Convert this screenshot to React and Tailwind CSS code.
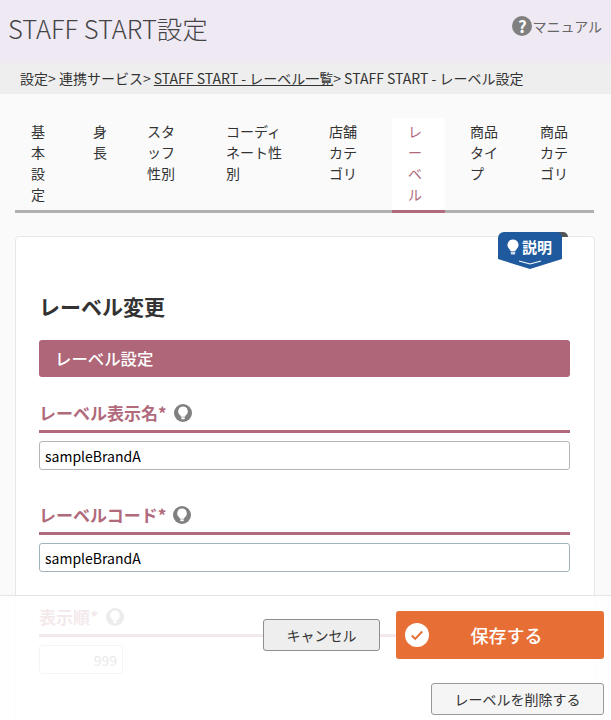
const font = { fontFamily: '"Noto Sans CJK JP", "Noto Sans", sans-serif' }

const tabs = [
  { lines: ["基", "本", "設", "定"], cls: "w-[62px] pl-4" },
  { lines: ["身", "長"], cls: "w-[54px] pl-4" },
  { lines: ["スタ", "ッフ", "性別"], cls: "w-[79px] pl-4" },
  { lines: ["コーディ", "ネート性", "別"], cls: "w-[103px] pl-4" },
  { lines: ["店舗", "カテ", "ゴリ"], cls: "w-[79px] pl-4" },
  { lines: ["レ", "ー", "ベ", "ル"], cls: "w-[53px] pl-4", active: true },
  { lines: ["商品", "タイ", "プ"], cls: "w-[79px] pl-[25px]" },
  { lines: ["商品", "カテ", "ゴリ"], cls: "w-[70px] pl-4" },
]

function Bulb({ className, bg = "#808080" }) {
  return (
    <svg viewBox="0 0 18 18" className={className}>
      <circle cx="9" cy="9" r="9" fill={bg} />
      <path d="M9 2.600a4.800 4.800 0 0 0-2.900 8.600c.6.500.8 1 .8 1.500h4.200c0-.5.200-1 .8-1.500A4.800 4.800 0 0 0 9 2.600z" fill="#fff" />
      <rect x="7.200" y="13.300" width="3.600" height="2" rx=".7" fill="#fff" />
    </svg>
  )
}

function Field({ label, children }) {
  return (
    <div className="h-[102px]">
      <div className="flex h-[30px] items-center gap-[7px] text-[17px] leading-[30px] font-bold text-[#b06a7c]">
        {label}
        <Bulb className="h-[18px] w-[18px]" />
      </div>
      <div className="mt-[2px] h-[3px] bg-[#b06a7c]" />
      {children}
    </div>
  )
}

export default function App() {
  return (
    <div className="relative h-[720px] w-[611px] overflow-hidden bg-[#fafafa] text-[#333]" style={font}>
      <header className="flex h-[63px] items-start justify-between bg-[#efe9f4] pl-2 pr-[9px]">
        <h1 className="mt-[9px] text-[25.5px] leading-[38px] font-light text-[#444]">STAFF START設定</h1>
        <a className="mt-[16px] flex items-center text-sm leading-5 text-[#666]">
          <span className="flex h-5 w-5 items-center justify-center rounded-full bg-[#808080] text-[17px] font-bold text-white">?</span>
          マニュアル
        </a>
      </header>

      <nav className="h-[31px] bg-[#eeeeee] pl-5 text-sm leading-[31px] whitespace-nowrap">
        設定&gt; 連携サービス&gt; <span className="underline">STAFF START - レーベル一覧</span>&gt; STAFF START - レーベル設定
      </nav>

      <div className="mx-[15px] mt-6 flex h-[95px] w-[579px] border-b-[3px] border-[#b0b0b0] text-sm leading-[21px]">
        {tabs.map((tab, i) => (
          <div
            key={i}
            className={`${tab.cls} -mb-[3px] h-[95px] pt-[3px] ${tab.active ? "border-b-[3px] border-[#b06a7c] bg-white text-[#b06a7c]" : ""}`}
          >
            {tab.lines.map((line) => (
              <div key={line}>{line}</div>
            ))}
          </div>
        ))}
      </div>

      <section className="relative mx-[15px] mt-[23px] h-[500px] w-[580px] rounded border border-[#e8e8e8] bg-white pt-[53px] pr-6 pl-[23px]">
        <div className="absolute top-[-5px] right-[25px] h-[38px] w-[71px]">
          <svg viewBox="0 0 71 38" className="absolute inset-0 h-full w-full">
            <path d="M58 0h7a5 5 0 0 1 5 5H58z" fill="#555" />
            <path d="M6 0h53a5 5 0 0 1 5 5v22l-32 10L0 27V6a6 6 0 0 1 6-6z" fill="#1f5a9e" />
            <path d="M21 29l11 3 11-3" fill="none" stroke="#fff" strokeWidth="1.200" />
            <path d="M15 7.500a5.500 5.500 0 0 0-3.300 9.900c.7.600.9 1.200.9 1.800h4.800c0-.6.200-1.200.9-1.800A5.500 5.500 0 0 0 15 7.500z" fill="#fff" />
            <rect x="12.800" y="19.800" width="4.400" height="2.800" rx=".8" fill="#cfdcec" />
          </svg>
          <span className="absolute top-[3px] left-6 text-[15px] leading-[24px] font-bold text-white">説明</span>
        </div>

        <h2 className="text-[21px] leading-[32px] font-bold text-[#333]">レーベル変更</h2>
        <div className="mt-[18px] flex h-[37px] items-center rounded-[3px] bg-[#ae6678] pl-4 text-[16.4px] font-medium text-white">
          レーベル設定
        </div>

        <div className="mt-[21px]">
          <Field label="レーベル表示名*">
            <input
              readOnly
              value="sampleBrandA"
              className="mt-2 h-[29px] w-full rounded-[3px] border border-[#b5b5b5] bg-white px-[5px] text-sm text-black outline-none"
            />
          </Field>
          <Field label="レーベルコード*">
            <input
              readOnly
              value="sampleBrandA"
              className="mt-2 h-[29px] w-full rounded-[3px] border border-[#9fb4bb] bg-white px-[5px] text-sm text-black outline-none"
            />
          </Field>
          <Field label="表示順*">
            <input
              readOnly
              value="999"
              className="mt-2 h-[29px] w-[84px] rounded-[3px] border border-[#b5b5b5] bg-white px-[5px] text-right text-sm text-[#666] outline-none"
            />
          </Field>
        </div>
      </section>

      {/* Fixed footer sits over the form */}
      <footer className="absolute inset-x-0 bottom-0 h-[125px] border-t border-[#e4e4e4] bg-white/85">
        <div className="mt-[15px] mr-[7px] flex items-start justify-end">
          <button className="mt-2 h-8 w-[117px] rounded-[3px] border border-[#8e8e8e] bg-[#eeeeee] text-sm text-[#333]">
            キャンセル
          </button>
          <button className="relative ml-4 h-12 w-[208px] rounded-[3px] bg-[#e76f36] pl-[13px] text-lg font-medium text-white">
            <span className="absolute top-[12px] left-[9px] flex h-6 w-6 items-center justify-center rounded-full bg-white">
              <svg viewBox="0 0 16 16" className="h-4 w-4">
                <path d="M2.800 8.500l3.400 3.400L13.200 4.500" fill="none" stroke="#e76f36" strokeWidth="2" />
              </svg>
            </span>
            保存する
          </button>
        </div>
        <div className="mt-6 mr-[7px] flex justify-end">
          <button className="h-8 w-[173px] rounded-[3px] border border-[#999] bg-[#f5f5f5] text-sm text-[#333]">
            レーベルを削除する
          </button>
        </div>
      </footer>
    </div>
  )
}
